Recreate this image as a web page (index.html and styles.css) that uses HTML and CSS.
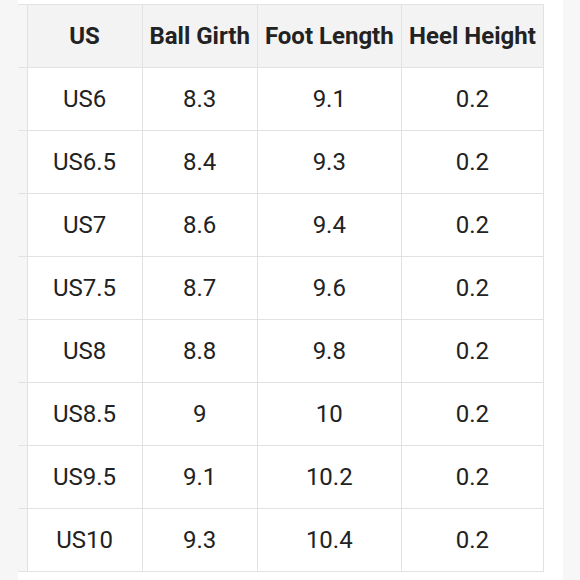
FILE: index.html
```html
<!DOCTYPE html>
<html>
<head>
<meta charset="utf-8">
<link rel="stylesheet" href="styles.css">
</head>
<body>
<div class="page">
  <div class="strip-left"></div>
  <div class="main">
    <table class="sizes">
      <colgroup>
        <col class="c-stub">
        <col class="c-us">
        <col class="c-ball">
        <col class="c-foot">
        <col class="c-heel">
      </colgroup>
      <thead>
        <tr><th class="stub"></th><th>US</th><th>Ball Girth</th><th>Foot Length</th><th>Heel Height</th></tr>
      </thead>
      <tbody>
        <tr><td class="stub"></td><td>US6</td><td>8.3</td><td>9.1</td><td>0.2</td></tr>
        <tr><td class="stub"></td><td>US6.5</td><td>8.4</td><td>9.3</td><td>0.2</td></tr>
        <tr><td class="stub"></td><td>US7</td><td>8.6</td><td>9.4</td><td>0.2</td></tr>
        <tr><td class="stub"></td><td>US7.5</td><td>8.7</td><td>9.6</td><td>0.2</td></tr>
        <tr><td class="stub"></td><td>US8</td><td>8.8</td><td>9.8</td><td>0.2</td></tr>
        <tr><td class="stub"></td><td>US8.5</td><td>9</td><td>10</td><td>0.2</td></tr>
        <tr><td class="stub"></td><td>US9.5</td><td>9.1</td><td>10.2</td><td>0.2</td></tr>
        <tr><td class="stub"></td><td>US10</td><td>9.3</td><td>10.4</td><td>0.2</td></tr>
      </tbody>
    </table>
  </div>
  <div class="gap-right"></div>
  <div class="strip-right"></div>
</div>
</body>
</html>
```
FILE: styles.css
```css
html, body {
  margin: 0;
  padding: 0;
  background: #ffffff;
}
.page {
  display: flex;
  width: 580px;
  height: 580px;
  overflow: hidden;
}
.strip-left {
  width: 18px;
  flex: none;
  background: #f6f6f6;
}
.main {
  flex: none;
  width: 526px;
  padding-top: 4px;
}
.gap-right {
  flex: none;
  width: 19px;
}
.strip-right {
  flex: 1;
  background: #f7f7f7;
}
.sizes {
  border-collapse: collapse;
  table-layout: fixed;
  width: 526px;
  font-family: Roboto, "Liberation Sans", sans-serif;
  color: #222222;
}
.c-stub { width: 9px; }
.c-us { width: 115px; }
.c-ball { width: 115px; }
.c-foot { width: 144px; }
.c-heel { width: 142px; }
.sizes th, .sizes td {
  border: 1px solid #e2e2e2;
  height: 63px;
  padding: 0;
  text-align: center;
  font-size: 24px;
  box-sizing: border-box;
}
.sizes th {
  background: #f3f3f3;
  font-weight: 700;
}
.sizes td {
  font-weight: 400;
  background: #ffffff;
}
.sizes .stub {
  background: #f6f6f6;
  border-left: none;
}
```
